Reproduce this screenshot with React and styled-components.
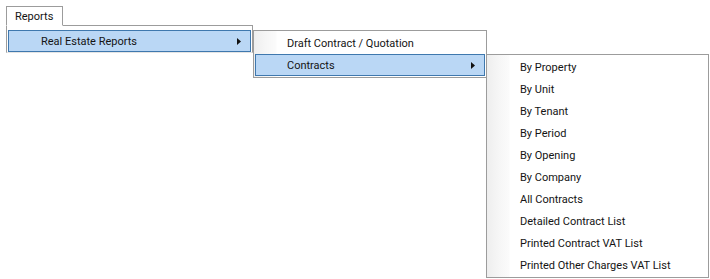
import React from "react";
import styled, { createGlobalStyle } from "styled-components";

const GlobalStyle = createGlobalStyle`
  html, body { margin: 0; padding: 0; background: #ffffff; }
  body {
    font-family: Roboto, "Liberation Sans", sans-serif;
    font-size: 11px;
    color: #141414;
  }
`;

const Page = styled.div`
  width: 710px;
  height: 279px;
  overflow: hidden;
  padding: 6px 0 0 6px;
  box-sizing: border-box;
  display: flex;
  flex-direction: column;
  align-items: flex-start;
`;

const Tab = styled.div`
  position: relative;
  z-index: 2;
  box-sizing: border-box;
  width: 57px;
  height: 20px;
  margin-bottom: -1px;
  padding: 1px 0 0 8px;
  border: 1px solid #9c9c9c;
  border-bottom-color: #ffffff;
  background: #ffffff;
  display: flex;
  align-items: center;
  line-height: 1;
`;

const Menu = styled.div`
  position: ${(p) => (p.$floating ? "absolute" : "relative")};
  left: ${(p) => p.$left ?? "auto"};
  top: ${(p) => p.$top ?? "auto"};
  z-index: ${(p) => p.$layer ?? 1};
  box-sizing: border-box;
  width: ${(p) => p.$width}px;
  display: flex;
  flex-direction: column;
  padding: ${(p) => p.$pad};
  border: 1px solid #9c9c9c;
  border-bottom-color: ${(p) => p.$bottom ?? "#9c9c9c"};
  background: ${(p) =>
    p.$iconColumn
      ? "linear-gradient(90deg, #eeeeee 0px, #f6f6f6 12px, #fbfbfb 22px, #ffffff 23px)"
      : "#ffffff"};
`;

const Item = styled.div`
  position: relative;
  box-sizing: border-box;
  height: 22px;
  display: flex;
  align-items: center;
  padding: 0 9px 0 ${(p) => p.$indent}px;
  border: 1px solid ${(p) => (p.$active ? "#3f78ae" : "transparent")};
  background: ${(p) => (p.$active ? "#bad7f5" : "transparent")};
  white-space: nowrap;
  line-height: 1;
`;

const Label = styled.span`
  flex: 1;
`;

const Arrow = () => (
  <svg width="4" height="7" viewBox="0 0 4 7" style={{ display: "block" }}>
    <path d="M0 0 L4 3.5 L0 7 Z" fill="#111" />
  </svg>
);

const contracts = [
  "By Property",
  "By Unit",
  "By Tenant",
  "By Period",
  "By Opening",
  "By Company",
  "All Contracts",
  "Detailed Contract List",
  "Printed Contract VAT List",
  "Printed Other Charges VAT List",
];

export default function App() {
  return (
    <>
      <GlobalStyle />
      <Page>
        <Tab>Reports</Tab>
        <Menu $width={247} $pad="4px 1px 0 1px" $bottom="#e4e4e4">
          <Item $active $indent={32}>
            <Label>Real Estate Reports</Label>
            <Arrow />
            <Menu $floating $left="244px" $top="-1px" $layer={3} $width={234} $pad="1px" $iconColumn>
              <Item $indent={31}>
                <Label>Draft Contract / Quotation</Label>
              </Item>
              <Item $active $indent={31}>
                <Label>Contracts</Label>
                <Arrow />
                <Menu $floating $left="230px" $top="-1px" $layer={4} $width={223} $pad="1px" $iconColumn>
                  {contracts.map((c) => (
                    <Item key={c} $indent={31}>
                      <Label>{c}</Label>
                    </Item>
                  ))}
                </Menu>
              </Item>
            </Menu>
          </Item>
        </Menu>
      </Page>
    </>
  );
}
